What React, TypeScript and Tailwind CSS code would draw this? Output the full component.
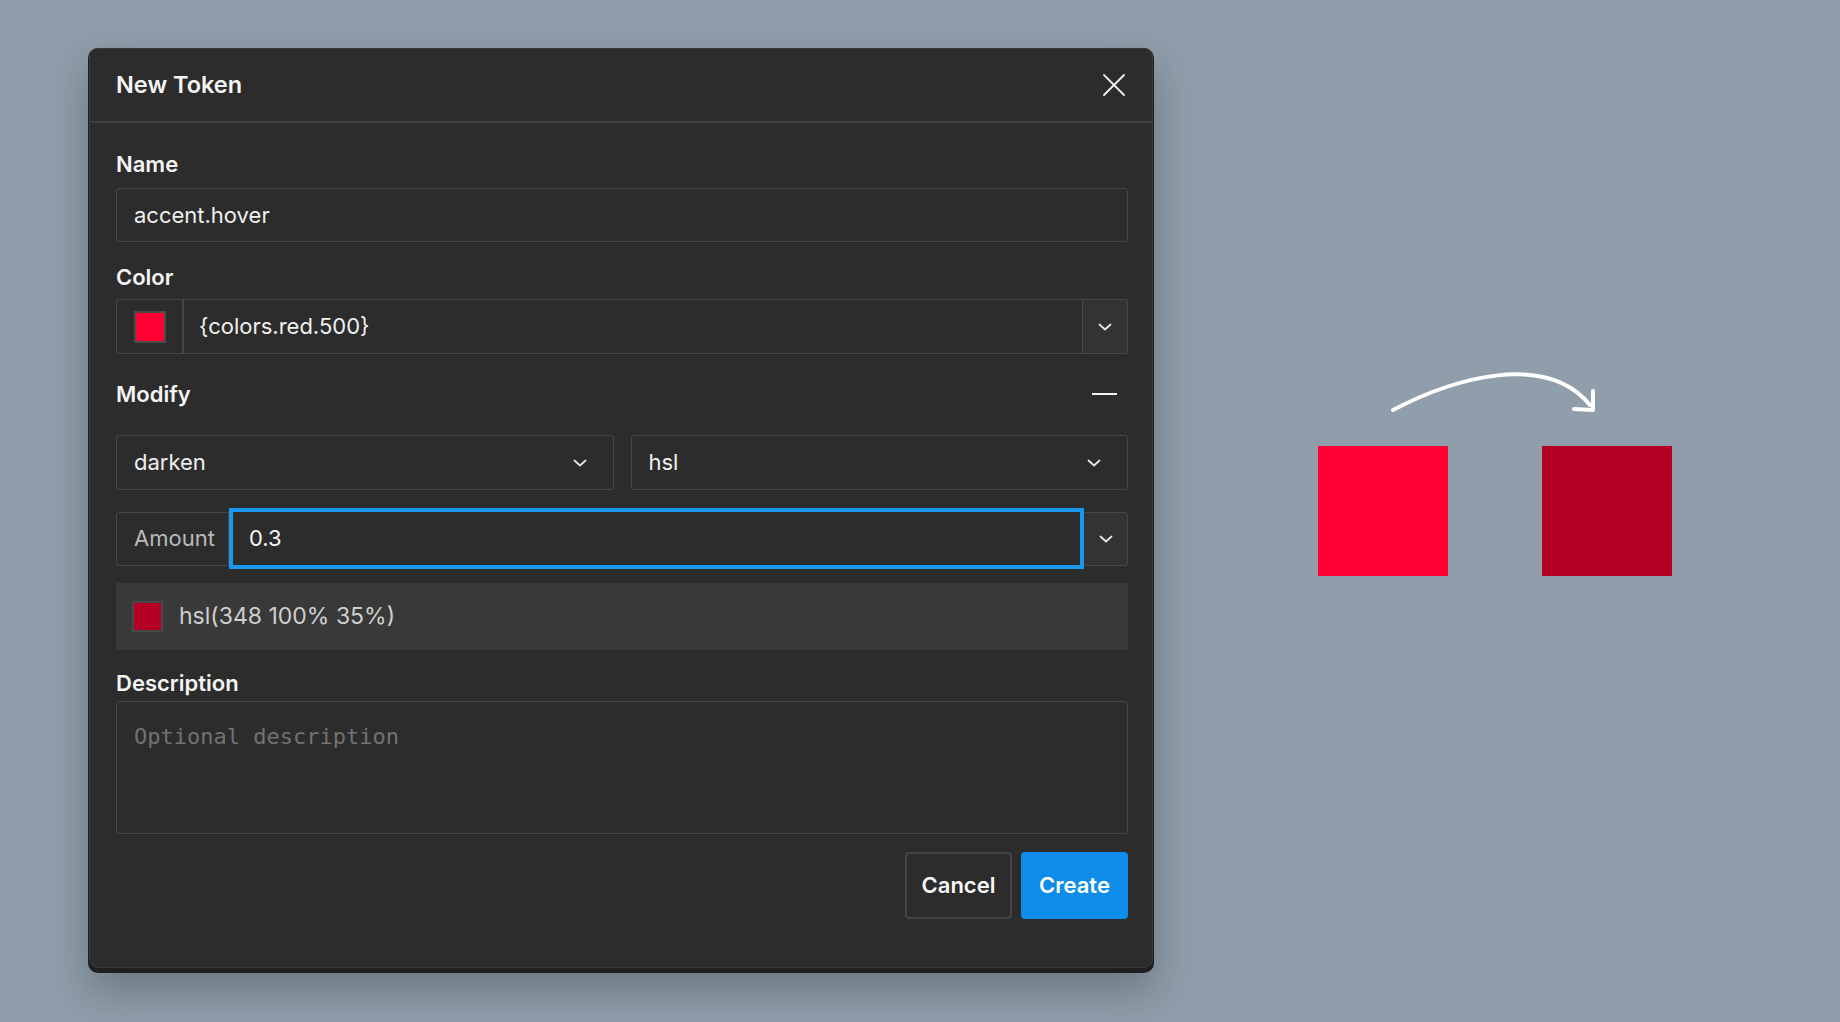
import React from "react";

const font = { fontFamily: "Inter, 'Noto Sans', sans-serif" };

function Chevron({ className = "" }: { className?: string }) {
  return (
    <svg width="14" height="8" viewBox="0 0 14 8" className={className}>
      <path
        d="M1.5 1.5 L7 6.5 L12.5 1.5"
        fill="none"
        stroke="#e6e6e6"
        strokeWidth="1.8"
        strokeLinecap="round"
        strokeLinejoin="round"
      />
    </svg>
  );
}

function Label({ children, className = "" }: { children: React.ReactNode; className?: string }) {
  return (
    <div className={`text-[22px] leading-[28px] font-semibold text-[#f4f4f4] ${className}`}>
      {children}
    </div>
  );
}

function Select({ value }: { value: string }) {
  return (
    <div className="flex-1 h-[55px] flex items-center justify-between pl-[17px] pr-[26px] border border-[#474747] rounded-[3px] text-[22px] text-[#efefef]">
      <span>{value}</span>
      <Chevron />
    </div>
  );
}

export default function App() {
  return (
    <div
      className="w-[1840px] h-[1022px] bg-[#8f9eaa] flex items-start pl-[88px] pt-[48px] overflow-hidden"
      style={font}
    >
      {/* dialog */}
      <div className="w-[1066px] h-[925px] rounded-[10px] bg-[#1f1f1f] pl-[1px] pr-[1px] pb-[5px] shadow-[0_18px_40px_rgba(40,50,60,0.35)] shrink-0">
        <div className="h-full rounded-[9px] bg-[#2c2c2c] border border-[#3b3b3b] flex flex-col">
          <div className="h-[74px] shrink-0 flex items-center justify-between pl-[26px] pr-[26px] border-b-2 border-[#3f3f3f]">
            <span className="text-[23.5px] font-semibold text-[#f4f4f4]">New Token</span>
            <svg width="24" height="24" viewBox="0 0 24 24">
              <path d="M2 2 L22 22 M22 2 L2 22" stroke="#f2f2f2" strokeWidth="1.8" strokeLinecap="round" />
            </svg>
          </div>

          <div className="flex flex-col pl-[26px] pr-[24px] pt-[27px]">
            <Label>Name</Label>
            <div className="mt-[10px] h-[54px] flex items-center px-[17px] border border-[#474747] rounded-[3px] text-[22px] text-[#f0f0f0]">
              accent.hover
            </div>

            <Label className="mt-[21px]">Color</Label>
            <div className="mt-[8px] h-[55px] flex">
              <div className="w-[67px] h-full flex items-center justify-center border border-[#474747] rounded-l-[3px]">
                <div className="w-[32px] h-[32px] bg-[#ff0033] border-2 border-[#4a4a4a]" />
              </div>
              <div className="flex-1 h-full flex items-center px-[15px] border border-[#474747] text-[22px] text-[#f0f0f0]">
                {"{colors.red.500}"}
              </div>
              <div className="w-[45px] h-full flex items-center justify-center bg-[#333333] border border-l-0 border-[#474747] rounded-r-[3px]">
                <Chevron />
              </div>
            </div>

            <div className="mt-[26px] h-[28px] flex items-center justify-between pr-[11px]">
              <Label>Modify</Label>
              <div className="w-[25px] h-[2px] bg-[#f2f2f2]" />
            </div>

            <div className="mt-[27px] flex gap-[17px]">
              <Select value="darken" />
              <Select value="hsl" />
            </div>

            <div className="mt-[18px] h-[61px] flex items-center">
              <div className="w-[113px] h-[54px] flex items-center pl-[17px] border border-[#474747] rounded-l-[3px] text-[22px] text-[#b9b9b9]">
                Amount
              </div>
              <div className="flex-1 h-[61px] flex items-center pl-[16px] border-4 border-[#1a98f0] text-[22px] text-[#f4f4f4]">
                0.3
              </div>
              <div className="w-[44px] h-[54px] flex items-center justify-center bg-[#333333] border border-l-0 border-[#474747] rounded-r-[3px]">
                <Chevron />
              </div>
            </div>

            <div className="mt-[14px] h-[67px] flex items-center gap-[16px] pl-[16px] bg-[#393939]">
              <div className="w-[31px] h-[31px] bg-[#b30024] border-2 border-[#474747]" />
              <span className="text-[23px] text-[#cfcfcf]">hsl(348 100% 35%)</span>
            </div>

            <Label className="mt-[19px]">Description</Label>
            <div
              className="mt-[4px] h-[133px] border border-[#474747] rounded-[3px] px-[17px] pt-[21px] text-[22px] leading-[28px] text-[#727272]"
              style={{ fontFamily: "'DejaVu Sans Mono', 'Liberation Mono', monospace" }}
            >
              Optional description
            </div>

            <div className="mt-[18px] flex justify-end gap-[9px]">
              <div className="w-[107px] h-[67px] flex items-center justify-center border-2 border-[#444444] rounded-[4px] text-[22px] font-semibold text-[#f6f6f6]">
                Cancel
              </div>
              <div className="w-[107px] h-[67px] flex items-center justify-center bg-[#0d8ce9] rounded-[4px] text-[22px] font-semibold text-white">
                Create
              </div>
            </div>
          </div>
        </div>
      </div>

      {/* illustration */}
      <div className="ml-[164px] mt-[312px] flex flex-col shrink-0">
        <svg width="354" height="86" viewBox="0 0 354 86">
          <path
            d="M75 50 C132 20 227 -10 272 45"
            fill="none"
            stroke="#ffffff"
            strokeWidth="4"
            strokeLinecap="round"
          />
          <path
            d="M275 31 L275 50 L256 49"
            fill="none"
            stroke="#ffffff"
            strokeWidth="4"
            strokeLinecap="round"
            strokeLinejoin="round"
          />
        </svg>
        <div className="flex gap-[94px]">
          <div className="w-[130px] h-[130px] bg-[#ff0033]" />
          <div className="w-[130px] h-[130px] bg-[#b30024]" />
        </div>
      </div>
    </div>
  );
}
